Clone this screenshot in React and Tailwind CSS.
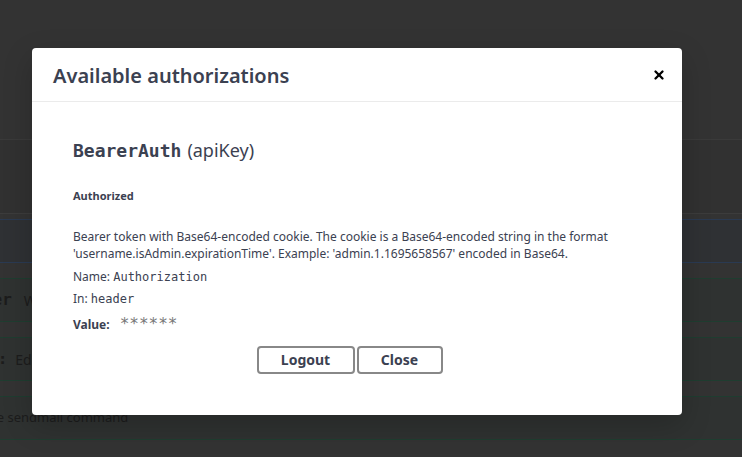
import { X } from 'lucide-react'

const sans = { fontFamily: '"Noto Sans", "Open Sans", sans-serif' }

function Row({ border, bg, children }) {
  return (
    <div className={`flex h-[44px] items-center border-y ${border} ${bg}`}>
      {children}
    </div>
  )
}

export default function App() {
  return (
    <div className="relative h-[457px] w-[742px] overflow-hidden bg-[#333333]" style={sans}>
      {/* dimmed page behind the modal */}
      <div className="flex flex-col">
        <div className="h-[140px] border-b border-[#3a3a3a]" />
        <div className="h-[74px] border-b border-[#3c3c3c] bg-[#313131]" />
        <div className="mt-[5px]">
          <Row border="border-[#2a3a52]" bg="bg-[#2f3134]" />
        </div>
        <div className="mt-[15px]">
          <Row border="border-[#1f3d30]" bg="bg-[#2f3231]">
            <span className="ml-[-46px] font-['DejaVu_Sans_Mono'] text-[16px] font-bold text-[#1c1c1c]">sender</span>
            <span className="ml-3 text-[14px] text-[#1c1c1c]">With</span>
          </Row>
        </div>
        <div className="mt-[15px]">
          <Row border="border-[#1f3d30]" bg="bg-[#2f3231]">
            <span className="ml-[-12px] font-['DejaVu_Sans_Mono'] text-[16px] font-bold text-[#1c1c1c]">t:</span>
            <span className="ml-[8px] text-[14px] text-[#1c1c1c]">Edit</span>
          </Row>
        </div>
        <div className="mt-[15px]">
          <Row border="border-[#1f3d30]" bg="bg-[#2f3231]">
            <span className="ml-[-16px] text-[13px] text-[#1c1c1c]">the sendmail command</span>
          </Row>
        </div>
      </div>

      {/* modal */}
      <div className="absolute left-[32px] top-[48px] h-[367px] w-[650px] rounded-[4px] bg-white shadow-[0_10px_30px_0_rgba(0,0,0,0.2)]">
        <div className="flex h-[54px] items-center justify-between border-b border-[#ebebeb] pl-[21px] pr-[16px] pt-[2px]">
          <h3 className="text-[20px] font-semibold text-[#3b4151]">Available authorizations</h3>
          <X size={14} strokeWidth={4} className="mb-[2px] text-black" />
        </div>
        <div className="px-[41px] pt-[35px] text-[#3b4151]">
          <h4 className="flex items-baseline gap-[6px] text-[18px] text-[#3b4151]">
            <code className="font-['DejaVu_Sans_Mono'] font-bold">BearerAuth</code>
            <span>(apiKey)</span>
          </h4>
          <h6 className="mt-[24px] text-[11px] font-bold">Authorized</h6>
          <p className="mt-[23px] text-[12px] leading-[17px]">
            Bearer token with Base64-encoded cookie. The cookie is a Base64-encoded string in the format 'username.isAdmin.expirationTime'. Example: 'admin.1.1695658567' encoded in Base64.
          </p>
          <p className="mt-[6px] text-[12px] leading-[18px]">
            Name: <code className="font-['DejaVu_Sans_Mono']">Authorization</code>
          </p>
          <p className="mt-[4px] text-[12px] leading-[18px]">
            In: <code className="font-['DejaVu_Sans_Mono']">header</code>
          </p>
          <div className="mt-[4px] flex items-baseline text-[12px]">
            <label className="font-bold">Value:</label>
            <code className="ml-[10px] font-['DejaVu_Sans_Mono'] text-[16px] text-[#777]">******</code>
          </div>
          <div className="mt-[10px] flex justify-center gap-[2px] pr-[15px]">
            <button className="h-[28px] w-[98px] rounded-[4px] border-2 border-[#888] text-[14px] font-bold text-[#3b4151]">Logout</button>
            <button className="h-[28px] w-[86px] rounded-[4px] border-2 border-[#888] text-[14px] font-bold text-[#3b4151]">Close</button>
          </div>
        </div>
      </div>
    </div>
  )
}
